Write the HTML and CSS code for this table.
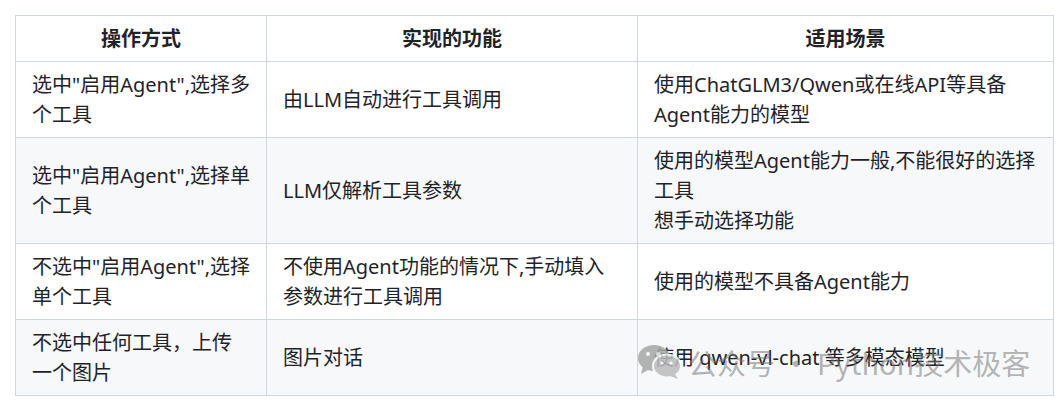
FILE: index.html
```html
<!DOCTYPE html>
<html lang="zh-CN">
<head>
<meta charset="utf-8">
<link rel="stylesheet" href="styles.css">
</head>
<body>
<div class="page">
  <table class="grid">
    <colgroup>
      <col class="c1"><col class="c2"><col class="c3">
    </colgroup>
    <thead>
      <tr><th>操作方式</th><th>实现的功能</th><th>适用场景</th></tr>
    </thead>
    <tbody>
      <tr>
        <td class="first">选中"启用Agent",选择多个工具</td>
        <td>由LLM自动进行工具调用</td>
        <td>使用ChatGLM3/Qwen或在线API等具备Agent能力的模型</td>
      </tr>
      <tr class="alt">
        <td class="first">选中"启用Agent",选择单个工具</td>
        <td>LLM仅解析工具参数</td>
        <td>使用的模型Agent能力一般,不能很好的选择工具<br>想手动选择功能</td>
      </tr>
      <tr>
        <td class="first">不选中"启用Agent",选择单个工具</td>
        <td>不使用Agent功能的情况下,手动填入参数进行工具调用</td>
        <td>使用的模型不具备Agent能力</td>
      </tr>
      <tr class="alt">
        <td class="first">不选中任何工具，上传<span class="nw">一个图片</span></td>
        <td>图片对话</td>
        <td>使用 qwen-vl-chat 等多模态模型</td>
      </tr>
    </tbody>
  </table>
  <div class="watermark">
    <svg class="wm-icon" width="46" height="36" viewBox="0 0 46 36">
      <ellipse cx="17" cy="14" rx="16" ry="13" fill="#a6a6a6"/>
      <path d="M6 22 L4 30 L13 25 Z" fill="#a6a6a6"/>
      <ellipse cx="30" cy="22" rx="14" ry="11.5" fill="#bcbcbc" stroke="#f6f8fa" stroke-width="2"/>
      <path d="M38 30 L41 35 L33 32 Z" fill="#bcbcbc"/>
      <circle cx="11" cy="10" r="2" fill="#f6f8fa"/>
      <circle cx="21" cy="10" r="2" fill="#f6f8fa"/>
      <circle cx="25" cy="19" r="1.6" fill="#f6f8fa"/>
      <circle cx="34" cy="19" r="1.6" fill="#f6f8fa"/>
    </svg>
    <span class="wm-text">公众号 · Python技术极客</span>
  </div>
</div>
</body>
</html>
```
FILE: styles.css
```css
html, body {
  margin: 0;
  padding: 0;
  background: #ffffff;
}
.page {
  position: relative;
  padding: 15px 0 0 15px;
  font-family: "Noto Sans", "Noto Sans CJK SC", sans-serif;
  color: #1f2328;
}
.grid {
  border-collapse: collapse;
  table-layout: fixed;
  width: 1038px;
  font-size: 20px;
  line-height: 30px;
}
.c1 { width: 251px; }
.c2 { width: 371px; }
.c3 { width: 416px; }
.grid th,
.grid td {
  border: 1px solid #d0d7de;
  padding: 7.5px 16px 7.5px 16px;
  vertical-align: middle;
  text-align: left;
}
.grid td.first {
  padding-right: 4px;
}
.nw {
  white-space: nowrap;
}
.grid th {
  font-weight: 700;
  text-align: center;
}
.grid tr.alt td {
  background: #f6f8fa;
}
.watermark {
  position: absolute;
  left: 637px;
  top: 344px;
  display: flex;
  align-items: center;
  gap: 5px;
  pointer-events: none;
}
.wm-icon {
  opacity: 0.85;
}
.wm-text {
  font-family: "Noto Sans CJK SC", sans-serif;
  font-size: 29px;
  line-height: 36px;
  color: rgba(120, 120, 120, 0.55);
}
```
